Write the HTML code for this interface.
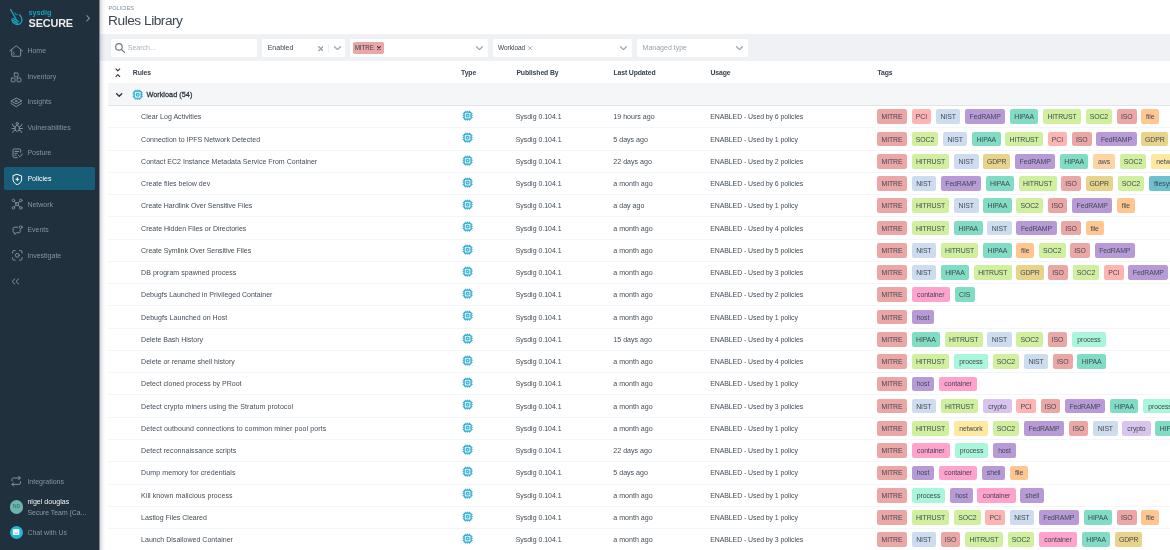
<!DOCTYPE html>
<html><head><meta charset="utf-8"><title>Rules Library</title>
<style>
*{box-sizing:border-box}
html,body{margin:0;padding:0}
body{width:1170px;height:550px;overflow:hidden;position:relative;background:#fff;font-family:"Liberation Sans",sans-serif;color:#3a4450;font-size:7px}
#side{position:absolute;left:0;top:0;width:99.4px;height:550px;background:#21303d;z-index:3}
#sidein{position:absolute;left:0;top:0;width:99px;height:550px;filter:blur(0.4px);will-change:transform}
#sideshadow{position:absolute;left:99.4px;top:0;width:5.5px;height:550px;background:linear-gradient(90deg,rgba(40,50,60,.30),rgba(40,50,60,.10) 40%,rgba(40,50,60,0));z-index:2}
.mi{position:absolute;left:4px;width:91px;height:22.6px;border-radius:2px;color:#8693a0;font-size:7px}
.mi span{position:absolute;left:23.4px;top:0.9px;line-height:22.6px;white-space:nowrap}
.mi svg{position:absolute;left:6.4px;top:5.3px;width:12.4px;height:12.4px;fill:none;stroke:#8693a0;stroke-width:1.9;stroke-linecap:round;stroke-linejoin:round}
.mi.act{background:#175d77;color:#fff}
.mi.act svg{stroke:#fff}
.mi.act span{top:0}
#main{position:absolute;left:0;top:0;width:1170px;height:550px;filter:blur(0.4px);will-change:transform}
#crumb{position:absolute;left:108.6px;top:5.4px;font-size:5.5px;color:#7f8c9a;letter-spacing:0;line-height:6px}
#title{position:absolute;left:108.1px;top:12.8px;font-size:13.7px;line-height:16px;color:#3d4752;letter-spacing:-0.48px;white-space:nowrap}
#fbar{position:absolute;left:99px;top:34px;width:1071px;height:27.2px;background:#eff1f5}
.fb{position:absolute;top:39px;height:18px;background:#fff;border-radius:1.5px}
.fb span{position:absolute;top:0;line-height:18px;white-space:nowrap}
.fb svg{position:absolute}
#thead span{position:absolute;top:67.6px;line-height:9px;font-weight:bold;font-size:6.85px;color:#38424d;white-space:nowrap;letter-spacing:-0.1px}
#grp{position:absolute;left:108.4px;top:83px;width:1062px;height:22.6px;background:#f5f6f8;border-bottom:1px solid #e1e4e9}
#grp .gt{position:absolute;left:38px;top:0;line-height:24.2px;font-weight:normal;-webkit-text-stroke:0.28px #2c3641;font-size:7.3px;color:#2c3641;letter-spacing:0.02px;white-space:nowrap}
.row{position:absolute;left:0;width:1170px;height:22.26px}
.row:after{content:"";position:absolute;left:108.4px;right:0;bottom:-0.5px;height:1px;background:#f4f5f8}
.c{position:absolute;top:0;line-height:20px;white-space:nowrap;color:#434d58}
.name{left:141.1px;font-size:7.03px}
.pub{left:515.7px;font-size:6.95px}
.upd{left:613.3px;font-size:7.08px}
.use{left:710.2px;font-size:6.95px;letter-spacing:-0.07px}
.chip{position:absolute}
.tag{position:absolute;top:3.8px;height:14.7px;line-height:15.3px;border-radius:2.2px;text-align:center;font-size:6.9px;color:#404a55;white-space:nowrap;overflow:hidden;letter-spacing:-0.1px}
</style></head>
<body>
<div id="main">
  <div id="crumb">POLICIES</div>
  <div id="title">Rules Library</div>
  <div id="fbar"></div>

  <!-- search -->
  <div class="fb" style="left:111px;width:146px">
    <svg viewBox="0 0 24 24" style="left:2.6px;top:2.6px;width:11.8px;height:11.8px" fill="none" stroke="#65778a" stroke-width="2.3" stroke-linecap="round"><circle cx="10" cy="10" r="6.6"/><path d="M15 15l6.3 6.3"/></svg>
    <span style="left:16.8px;color:#a9b3bf;font-size:7px">Search...</span>
  </div>
  <!-- enabled -->
  <div class="fb" style="left:262px;width:83.2px">
    <span style="left:5.7px;color:#3a4450;font-size:7px">Enabled</span>
    <svg viewBox="0 0 10 10" style="left:55.9px;top:6.5px;width:5.6px;height:5.6px" fill="none" stroke="#96a5b5" stroke-width="2.3" stroke-linecap="round"><path d="M1 1l8 8M9 1l-8 8"/></svg>
    <i style="position:absolute;left:66.4px;top:4.6px;width:0.8px;height:9px;background:#eef0f4"></i>
    <svg viewBox="0 0 12 8" style="left:71.6px;top:6.8px;width:7px;height:4.7px" fill="none" stroke="#96a5b5" stroke-width="2.1" stroke-linecap="round" stroke-linejoin="round"><path d="M1 1.2l5 5 5-5"/></svg>
  </div>
  <!-- MITRE select -->
  <div class="fb" style="left:350px;width:138.4px">
    <div style="position:absolute;left:2.6px;top:2.9px;width:31.4px;height:12.3px;background:#eba6a6;border-radius:1.8px"></div>
    <span style="left:4.7px;color:#3a4450;font-size:6.3px;letter-spacing:-0.1px">MITRE</span>
    <svg viewBox="0 0 10 10" style="left:27.2px;top:7.1px;width:3.8px;height:3.8px" fill="none" stroke="#2c3641" stroke-width="2.9" stroke-linecap="round"><path d="M1.4 1.4l7.2 7.2M8.6 1.4l-7.2 7.2"/></svg>
    <svg viewBox="0 0 12 8" style="left:126.4px;top:6.8px;width:7px;height:4.7px" fill="none" stroke="#96a5b5" stroke-width="2.1" stroke-linecap="round" stroke-linejoin="round"><path d="M1 1.2l5 5 5-5"/></svg>
  </div>
  <!-- Workload select -->
  <div class="fb" style="left:493px;width:139.2px">
    <span style="left:4.9px;color:#3a4450;font-size:6.5px;letter-spacing:0">Workload</span>
    <svg viewBox="0 0 10 10" style="left:35.4px;top:7px;width:4.3px;height:4.3px" fill="none" stroke="#8493a3" stroke-width="1.7" stroke-linecap="round"><path d="M1 1l8 8M9 1l-8 8"/></svg>
    <svg viewBox="0 0 12 8" style="left:126.8px;top:6.8px;width:7px;height:4.7px" fill="none" stroke="#96a5b5" stroke-width="2.1" stroke-linecap="round" stroke-linejoin="round"><path d="M1 1.2l5 5 5-5"/></svg>
  </div>
  <!-- Managed type -->
  <div class="fb" style="left:636.8px;width:110.8px">
    <span style="left:5.8px;color:#97a3b0;font-size:7px">Managed type</span>
    <svg viewBox="0 0 12 8" style="left:98.8px;top:6.8px;width:7px;height:4.7px" fill="none" stroke="#96a5b5" stroke-width="2.1" stroke-linecap="round" stroke-linejoin="round"><path d="M1 1.2l5 5 5-5"/></svg>
  </div>

  <!-- table header -->
  <div id="thead">
    <svg viewBox="0 0 12 20" style="position:absolute;left:115.1px;top:67.9px;width:5.7px;height:9.5px" fill="none" stroke="#2c3641" stroke-width="2.3" stroke-linecap="round" stroke-linejoin="round"><path d="M2 2l4 4 4-4M2 18l4-4 4 4"/></svg>
    <span style="left:132.8px">Rules</span>
    <span style="left:461.1px">Type</span>
    <span style="left:516.4px">Published By</span>
    <span style="left:613.4px">Last Updated</span>
    <span style="left:710.4px">Usage</span>
    <span style="left:877.4px">Tags</span>
  </div>
  <div id="grp">
    <svg viewBox="0 0 12 8" style="position:absolute;left:8.1px;top:9.8px;width:6.4px;height:4.3px" fill="none" stroke="#2c3641" stroke-width="2.6" stroke-linecap="round" stroke-linejoin="round"><path d="M1.2 1.2l4.8 4.8 4.8-4.8"/></svg>
    <svg class="chip" viewBox="0 0 24 24" style="left:23.6px;top:6.3px;width:11.4px;height:11.4px"><rect x="4.500" y="4.500" width="15" height="15" rx="2.400" fill="#e4f5fa" stroke="#1aa6ca" stroke-width="2.600"/><rect x="9.200" y="9.200" width="5.600" height="5.600" rx="0.500" fill="#bfe6f1" stroke="#1aa6ca" stroke-width="2.100"/><path d="M8 1.500v2M12 1.500v2M16 1.500v2M8 20.500v2M12 20.500v2M16 20.500v2M1.500 8h2M1.500 12h2M1.500 16h2M20.500 8h2M20.500 12h2M20.500 16h2" stroke="#1aa6ca" stroke-width="2.200" fill="none"/></svg>
    <span class="gt">Workload (54)</span>
  </div>
<div class="row" style="top:105.60px">
<span class="c name" style="top:1.600px;letter-spacing:0.033px">Clear Log Activities</span>
<svg class="chip" viewBox="0 0 24 24" style="left:461.7px;top:4.4px;width:11.2px;height:11.2px"><rect x="4.500" y="4.500" width="15" height="15" rx="2.400" fill="#e4f5fa" stroke="#1aa6ca" stroke-width="2.600"/><rect x="9.200" y="9.200" width="5.600" height="5.600" rx="0.500" fill="#bfe6f1" stroke="#1aa6ca" stroke-width="2.100"/><path d="M8 1.500v2M12 1.500v2M16 1.500v2M8 20.500v2M12 20.500v2M16 20.500v2M1.500 8h2M1.500 12h2M1.500 16h2M20.500 8h2M20.500 12h2M20.500 16h2" stroke="#1aa6ca" stroke-width="2.200" fill="none"/></svg>
<span class="c pub" style="top:1.600px">Sysdig 0.104.1</span>
<span class="c upd" style="top:1.600px">19 hours ago</span>
<span class="c use" style="top:1.600px">ENABLED - Used by 6 policies</span>
<span class="tag" style="left:877.00px;width:30.0px;background:#eba6a6;line-height:15.20px">MITRE</span>
<span class="tag" style="left:911.60px;width:19.7px;background:#ffb4b4;line-height:15.20px">PCI</span>
<span class="tag" style="left:935.90px;width:24.5px;background:#cddcee;line-height:15.20px">NIST</span>
<span class="tag" style="left:965.00px;width:40.3px;background:#b89bd6;line-height:15.20px">FedRAMP</span>
<span class="tag" style="left:1009.90px;width:28.6px;background:#80dcc2;line-height:15.20px">HIPAA</span>
<span class="tag" style="left:1043.10px;width:37.8px;background:#d0f09f;line-height:15.20px">HITRUST</span>
<span class="tag" style="left:1085.50px;width:26.7px;background:#d0f09f;line-height:15.20px">SOC2</span>
<span class="tag" style="left:1116.80px;width:19.8px;background:#eba6a6;line-height:15.20px">ISO</span>
<span class="tag" style="left:1141.20px;width:18.0px;background:#ffc690;line-height:15.20px">file</span>
</div>
<div class="row" style="top:127.86px">
<span class="c name" style="top:2.340px;letter-spacing:0.013px">Connection to IPFS Network Detected</span>
<svg class="chip" viewBox="0 0 24 24" style="left:461.7px;top:4.4px;width:11.2px;height:11.2px"><rect x="4.500" y="4.500" width="15" height="15" rx="2.400" fill="#e4f5fa" stroke="#1aa6ca" stroke-width="2.600"/><rect x="9.200" y="9.200" width="5.600" height="5.600" rx="0.500" fill="#bfe6f1" stroke="#1aa6ca" stroke-width="2.100"/><path d="M8 1.500v2M12 1.500v2M16 1.500v2M8 20.500v2M12 20.500v2M16 20.500v2M1.500 8h2M1.500 12h2M1.500 16h2M20.500 8h2M20.500 12h2M20.500 16h2" stroke="#1aa6ca" stroke-width="2.200" fill="none"/></svg>
<span class="c pub" style="top:2.340px">Sysdig 0.104.1</span>
<span class="c upd" style="top:2.340px">5 days ago</span>
<span class="c use" style="top:2.340px">ENABLED - Used by 1 policy</span>
<span class="tag" style="left:877.00px;width:30.0px;background:#eba6a6;line-height:16.68px">MITRE</span>
<span class="tag" style="left:911.60px;width:26.7px;background:#d0f09f;line-height:16.68px">SOC2</span>
<span class="tag" style="left:942.90px;width:24.5px;background:#cddcee;line-height:16.68px">NIST</span>
<span class="tag" style="left:972.00px;width:28.6px;background:#80dcc2;line-height:16.68px">HIPAA</span>
<span class="tag" style="left:1005.20px;width:37.8px;background:#d0f09f;line-height:16.68px">HITRUST</span>
<span class="tag" style="left:1047.60px;width:19.7px;background:#ffb4b4;line-height:16.68px">PCI</span>
<span class="tag" style="left:1071.90px;width:19.8px;background:#eba6a6;line-height:16.68px">ISO</span>
<span class="tag" style="left:1096.30px;width:40.3px;background:#b89bd6;line-height:16.68px">FedRAMP</span>
<span class="tag" style="left:1141.20px;width:27.3px;background:#e8d38a;line-height:16.68px">GDPR</span>
</div>
<div class="row" style="top:150.12px">
<span class="c name" style="top:2.080px;letter-spacing:0.012px">Contact EC2 Instance Metadata Service From Container</span>
<svg class="chip" viewBox="0 0 24 24" style="left:461.7px;top:4.4px;width:11.2px;height:11.2px"><rect x="4.500" y="4.500" width="15" height="15" rx="2.400" fill="#e4f5fa" stroke="#1aa6ca" stroke-width="2.600"/><rect x="9.200" y="9.200" width="5.600" height="5.600" rx="0.500" fill="#bfe6f1" stroke="#1aa6ca" stroke-width="2.100"/><path d="M8 1.500v2M12 1.500v2M16 1.500v2M8 20.500v2M12 20.500v2M16 20.500v2M1.500 8h2M1.500 12h2M1.500 16h2M20.500 8h2M20.500 12h2M20.500 16h2" stroke="#1aa6ca" stroke-width="2.200" fill="none"/></svg>
<span class="c pub" style="top:2.080px">Sysdig 0.104.1</span>
<span class="c upd" style="top:2.080px">22 days ago</span>
<span class="c use" style="top:2.080px">ENABLED - Used by 2 policies</span>
<span class="tag" style="left:877.00px;width:30.0px;background:#eba6a6;line-height:16.16px">MITRE</span>
<span class="tag" style="left:911.60px;width:37.8px;background:#d0f09f;line-height:16.16px">HITRUST</span>
<span class="tag" style="left:954.00px;width:24.5px;background:#cddcee;line-height:16.16px">NIST</span>
<span class="tag" style="left:983.10px;width:27.3px;background:#e8d38a;line-height:16.16px">GDPR</span>
<span class="tag" style="left:1015.00px;width:40.3px;background:#b89bd6;line-height:16.16px">FedRAMP</span>
<span class="tag" style="left:1059.90px;width:28.6px;background:#80dcc2;line-height:16.16px">HIPAA</span>
<span class="tag" style="left:1093.10px;width:22.0px;background:#ffd4a4;line-height:16.16px">aws</span>
<span class="tag" style="left:1119.70px;width:26.7px;background:#d0f09f;line-height:16.16px">SOC2</span>
<span class="tag" style="left:1151.00px;width:33.9px;background:#ffe8a0;line-height:16.16px">network</span>
</div>
<div class="row" style="top:172.38px">
<span class="c name" style="top:1.820px;letter-spacing:0.003px">Create files below dev</span>
<svg class="chip" viewBox="0 0 24 24" style="left:461.7px;top:4.4px;width:11.2px;height:11.2px"><rect x="4.500" y="4.500" width="15" height="15" rx="2.400" fill="#e4f5fa" stroke="#1aa6ca" stroke-width="2.600"/><rect x="9.200" y="9.200" width="5.600" height="5.600" rx="0.500" fill="#bfe6f1" stroke="#1aa6ca" stroke-width="2.100"/><path d="M8 1.500v2M12 1.500v2M16 1.500v2M8 20.500v2M12 20.500v2M16 20.500v2M1.500 8h2M1.500 12h2M1.500 16h2M20.500 8h2M20.500 12h2M20.500 16h2" stroke="#1aa6ca" stroke-width="2.200" fill="none"/></svg>
<span class="c pub" style="top:1.820px">Sysdig 0.104.1</span>
<span class="c upd" style="top:1.820px">a month ago</span>
<span class="c use" style="top:1.820px">ENABLED - Used by 6 policies</span>
<span class="tag" style="left:877.00px;width:30.0px;background:#eba6a6;line-height:15.64px">MITRE</span>
<span class="tag" style="left:911.60px;width:24.5px;background:#cddcee;line-height:15.64px">NIST</span>
<span class="tag" style="left:940.70px;width:40.3px;background:#b89bd6;line-height:15.64px">FedRAMP</span>
<span class="tag" style="left:985.60px;width:28.6px;background:#80dcc2;line-height:15.64px">HIPAA</span>
<span class="tag" style="left:1018.80px;width:37.8px;background:#d0f09f;line-height:15.64px">HITRUST</span>
<span class="tag" style="left:1061.20px;width:19.8px;background:#eba6a6;line-height:15.64px">ISO</span>
<span class="tag" style="left:1085.60px;width:27.3px;background:#e8d38a;line-height:15.64px">GDPR</span>
<span class="tag" style="left:1117.50px;width:26.7px;background:#d0f09f;line-height:15.64px">SOC2</span>
<span class="tag" style="left:1148.80px;width:39.8px;background:#6ec0ce;line-height:15.64px">filesystem</span>
</div>
<div class="row" style="top:194.64px">
<span class="c name" style="top:1.560px;letter-spacing:-0.051px">Create Hardlink Over Sensitive Files</span>
<svg class="chip" viewBox="0 0 24 24" style="left:461.7px;top:4.4px;width:11.2px;height:11.2px"><rect x="4.500" y="4.500" width="15" height="15" rx="2.400" fill="#e4f5fa" stroke="#1aa6ca" stroke-width="2.600"/><rect x="9.200" y="9.200" width="5.600" height="5.600" rx="0.500" fill="#bfe6f1" stroke="#1aa6ca" stroke-width="2.100"/><path d="M8 1.500v2M12 1.500v2M16 1.500v2M8 20.500v2M12 20.500v2M16 20.500v2M1.500 8h2M1.500 12h2M1.500 16h2M20.500 8h2M20.500 12h2M20.500 16h2" stroke="#1aa6ca" stroke-width="2.200" fill="none"/></svg>
<span class="c pub" style="top:1.560px">Sysdig 0.104.1</span>
<span class="c upd" style="top:1.560px">a day ago</span>
<span class="c use" style="top:1.560px">ENABLED - Used by 1 policy</span>
<span class="tag" style="left:877.00px;width:30.0px;background:#eba6a6;line-height:15.12px">MITRE</span>
<span class="tag" style="left:911.60px;width:37.8px;background:#d0f09f;line-height:15.12px">HITRUST</span>
<span class="tag" style="left:954.00px;width:24.5px;background:#cddcee;line-height:15.12px">NIST</span>
<span class="tag" style="left:983.10px;width:28.6px;background:#80dcc2;line-height:15.12px">HIPAA</span>
<span class="tag" style="left:1016.30px;width:26.7px;background:#d0f09f;line-height:15.12px">SOC2</span>
<span class="tag" style="left:1047.60px;width:19.8px;background:#eba6a6;line-height:15.12px">ISO</span>
<span class="tag" style="left:1072.00px;width:40.3px;background:#b89bd6;line-height:15.12px">FedRAMP</span>
<span class="tag" style="left:1116.90px;width:18.0px;background:#ffc690;line-height:15.12px">file</span>
</div>
<div class="row" style="top:216.90px">
<span class="c name" style="top:2.300px;letter-spacing:-0.014px">Create Hidden Files or Directories</span>
<svg class="chip" viewBox="0 0 24 24" style="left:461.7px;top:4.4px;width:11.2px;height:11.2px"><rect x="4.500" y="4.500" width="15" height="15" rx="2.400" fill="#e4f5fa" stroke="#1aa6ca" stroke-width="2.600"/><rect x="9.200" y="9.200" width="5.600" height="5.600" rx="0.500" fill="#bfe6f1" stroke="#1aa6ca" stroke-width="2.100"/><path d="M8 1.500v2M12 1.500v2M16 1.500v2M8 20.500v2M12 20.500v2M16 20.500v2M1.500 8h2M1.500 12h2M1.500 16h2M20.500 8h2M20.500 12h2M20.500 16h2" stroke="#1aa6ca" stroke-width="2.200" fill="none"/></svg>
<span class="c pub" style="top:2.300px">Sysdig 0.104.1</span>
<span class="c upd" style="top:2.300px">a month ago</span>
<span class="c use" style="top:2.300px">ENABLED - Used by 4 policies</span>
<span class="tag" style="left:877.00px;width:30.0px;background:#eba6a6;line-height:16.60px">MITRE</span>
<span class="tag" style="left:911.60px;width:37.8px;background:#d0f09f;line-height:16.60px">HITRUST</span>
<span class="tag" style="left:954.00px;width:28.6px;background:#80dcc2;line-height:16.60px">HIPAA</span>
<span class="tag" style="left:987.20px;width:24.5px;background:#cddcee;line-height:16.60px">NIST</span>
<span class="tag" style="left:1016.30px;width:40.3px;background:#b89bd6;line-height:16.60px">FedRAMP</span>
<span class="tag" style="left:1061.20px;width:19.8px;background:#eba6a6;line-height:16.60px">ISO</span>
<span class="tag" style="left:1085.60px;width:18.0px;background:#ffc690;line-height:16.60px">file</span>
</div>
<div class="row" style="top:239.16px">
<span class="c name" style="top:2.040px;letter-spacing:-0.053px">Create Symlink Over Sensitive Files</span>
<svg class="chip" viewBox="0 0 24 24" style="left:461.7px;top:4.4px;width:11.2px;height:11.2px"><rect x="4.500" y="4.500" width="15" height="15" rx="2.400" fill="#e4f5fa" stroke="#1aa6ca" stroke-width="2.600"/><rect x="9.200" y="9.200" width="5.600" height="5.600" rx="0.500" fill="#bfe6f1" stroke="#1aa6ca" stroke-width="2.100"/><path d="M8 1.500v2M12 1.500v2M16 1.500v2M8 20.500v2M12 20.500v2M16 20.500v2M1.500 8h2M1.500 12h2M1.500 16h2M20.500 8h2M20.500 12h2M20.500 16h2" stroke="#1aa6ca" stroke-width="2.200" fill="none"/></svg>
<span class="c pub" style="top:2.040px">Sysdig 0.104.1</span>
<span class="c upd" style="top:2.040px">a month ago</span>
<span class="c use" style="top:2.040px">ENABLED - Used by 5 policies</span>
<span class="tag" style="left:877.00px;width:30.0px;background:#eba6a6;line-height:16.08px">MITRE</span>
<span class="tag" style="left:911.60px;width:24.5px;background:#cddcee;line-height:16.08px">NIST</span>
<span class="tag" style="left:940.70px;width:37.8px;background:#d0f09f;line-height:16.08px">HITRUST</span>
<span class="tag" style="left:983.10px;width:28.6px;background:#80dcc2;line-height:16.08px">HIPAA</span>
<span class="tag" style="left:1016.30px;width:18.0px;background:#ffc690;line-height:16.08px">file</span>
<span class="tag" style="left:1038.90px;width:26.7px;background:#d0f09f;line-height:16.08px">SOC2</span>
<span class="tag" style="left:1070.20px;width:19.8px;background:#eba6a6;line-height:16.08px">ISO</span>
<span class="tag" style="left:1094.60px;width:40.3px;background:#b89bd6;line-height:16.08px">FedRAMP</span>
</div>
<div class="row" style="top:261.42px">
<span class="c name" style="top:1.780px;letter-spacing:0.033px">DB program spawned process</span>
<svg class="chip" viewBox="0 0 24 24" style="left:461.7px;top:4.4px;width:11.2px;height:11.2px"><rect x="4.500" y="4.500" width="15" height="15" rx="2.400" fill="#e4f5fa" stroke="#1aa6ca" stroke-width="2.600"/><rect x="9.200" y="9.200" width="5.600" height="5.600" rx="0.500" fill="#bfe6f1" stroke="#1aa6ca" stroke-width="2.100"/><path d="M8 1.500v2M12 1.500v2M16 1.500v2M8 20.500v2M12 20.500v2M16 20.500v2M1.500 8h2M1.500 12h2M1.500 16h2M20.500 8h2M20.500 12h2M20.500 16h2" stroke="#1aa6ca" stroke-width="2.200" fill="none"/></svg>
<span class="c pub" style="top:1.780px">Sysdig 0.104.1</span>
<span class="c upd" style="top:1.780px">a month ago</span>
<span class="c use" style="top:1.780px">ENABLED - Used by 3 policies</span>
<span class="tag" style="left:877.00px;width:30.0px;background:#eba6a6;line-height:15.56px">MITRE</span>
<span class="tag" style="left:911.60px;width:24.5px;background:#cddcee;line-height:15.56px">NIST</span>
<span class="tag" style="left:940.70px;width:28.6px;background:#80dcc2;line-height:15.56px">HIPAA</span>
<span class="tag" style="left:973.90px;width:37.8px;background:#d0f09f;line-height:15.56px">HITRUST</span>
<span class="tag" style="left:1016.30px;width:27.3px;background:#e8d38a;line-height:15.56px">GDPR</span>
<span class="tag" style="left:1048.20px;width:19.8px;background:#eba6a6;line-height:15.56px">ISO</span>
<span class="tag" style="left:1072.60px;width:26.7px;background:#d0f09f;line-height:15.56px">SOC2</span>
<span class="tag" style="left:1103.90px;width:19.7px;background:#ffb4b4;line-height:15.56px">PCI</span>
<span class="tag" style="left:1128.20px;width:40.3px;background:#b89bd6;line-height:15.56px">FedRAMP</span>
</div>
<div class="row" style="top:283.68px">
<span class="c name" style="top:1.520px;letter-spacing:-0.004px">Debugfs Launched in Privileged Container</span>
<svg class="chip" viewBox="0 0 24 24" style="left:461.7px;top:4.4px;width:11.2px;height:11.2px"><rect x="4.500" y="4.500" width="15" height="15" rx="2.400" fill="#e4f5fa" stroke="#1aa6ca" stroke-width="2.600"/><rect x="9.200" y="9.200" width="5.600" height="5.600" rx="0.500" fill="#bfe6f1" stroke="#1aa6ca" stroke-width="2.100"/><path d="M8 1.500v2M12 1.500v2M16 1.500v2M8 20.500v2M12 20.500v2M16 20.500v2M1.500 8h2M1.500 12h2M1.500 16h2M20.500 8h2M20.500 12h2M20.500 16h2" stroke="#1aa6ca" stroke-width="2.200" fill="none"/></svg>
<span class="c pub" style="top:1.520px">Sysdig 0.104.1</span>
<span class="c upd" style="top:1.520px">a month ago</span>
<span class="c use" style="top:1.520px">ENABLED - Used by 2 policies</span>
<span class="tag" style="left:877.00px;width:30.0px;background:#eba6a6;line-height:15.04px">MITRE</span>
<span class="tag" style="left:911.60px;width:38.4px;background:#ffa2cc;line-height:15.04px">container</span>
<span class="tag" style="left:954.60px;width:20.0px;background:#80dcc2;line-height:15.04px">CIS</span>
</div>
<div class="row" style="top:305.94px">
<span class="c name" style="top:2.260px;letter-spacing:0.046px">Debugfs Launched on Host</span>
<svg class="chip" viewBox="0 0 24 24" style="left:461.7px;top:4.4px;width:11.2px;height:11.2px"><rect x="4.500" y="4.500" width="15" height="15" rx="2.400" fill="#e4f5fa" stroke="#1aa6ca" stroke-width="2.600"/><rect x="9.200" y="9.200" width="5.600" height="5.600" rx="0.500" fill="#bfe6f1" stroke="#1aa6ca" stroke-width="2.100"/><path d="M8 1.500v2M12 1.500v2M16 1.500v2M8 20.500v2M12 20.500v2M16 20.500v2M1.500 8h2M1.500 12h2M1.500 16h2M20.500 8h2M20.500 12h2M20.500 16h2" stroke="#1aa6ca" stroke-width="2.200" fill="none"/></svg>
<span class="c pub" style="top:2.260px">Sysdig 0.104.1</span>
<span class="c upd" style="top:2.260px">a month ago</span>
<span class="c use" style="top:2.260px">ENABLED - Used by 1 policy</span>
<span class="tag" style="left:877.00px;width:30.0px;background:#eba6a6;line-height:16.52px">MITRE</span>
<span class="tag" style="left:911.60px;width:22.7px;background:#b89bd6;line-height:16.52px">host</span>
</div>
<div class="row" style="top:328.20px">
<span class="c name" style="top:2.000px;letter-spacing:-0.006px">Delete Bash History</span>
<svg class="chip" viewBox="0 0 24 24" style="left:461.7px;top:4.4px;width:11.2px;height:11.2px"><rect x="4.500" y="4.500" width="15" height="15" rx="2.400" fill="#e4f5fa" stroke="#1aa6ca" stroke-width="2.600"/><rect x="9.200" y="9.200" width="5.600" height="5.600" rx="0.500" fill="#bfe6f1" stroke="#1aa6ca" stroke-width="2.100"/><path d="M8 1.500v2M12 1.500v2M16 1.500v2M8 20.500v2M12 20.500v2M16 20.500v2M1.500 8h2M1.500 12h2M1.500 16h2M20.500 8h2M20.500 12h2M20.500 16h2" stroke="#1aa6ca" stroke-width="2.200" fill="none"/></svg>
<span class="c pub" style="top:2.000px">Sysdig 0.104.1</span>
<span class="c upd" style="top:2.000px">15 days ago</span>
<span class="c use" style="top:2.000px">ENABLED - Used by 4 policies</span>
<span class="tag" style="left:877.00px;width:30.0px;background:#eba6a6;line-height:16.00px">MITRE</span>
<span class="tag" style="left:911.60px;width:28.6px;background:#80dcc2;line-height:16.00px">HIPAA</span>
<span class="tag" style="left:944.80px;width:37.8px;background:#d0f09f;line-height:16.00px">HITRUST</span>
<span class="tag" style="left:987.20px;width:24.5px;background:#cddcee;line-height:16.00px">NIST</span>
<span class="tag" style="left:1016.30px;width:26.7px;background:#d0f09f;line-height:16.00px">SOC2</span>
<span class="tag" style="left:1047.60px;width:19.8px;background:#eba6a6;line-height:16.00px">ISO</span>
<span class="tag" style="left:1072.00px;width:33.9px;background:#aaf6da;line-height:16.00px">process</span>
</div>
<div class="row" style="top:350.46px">
<span class="c name" style="top:1.740px;letter-spacing:0.017px">Delete or rename shell history</span>
<svg class="chip" viewBox="0 0 24 24" style="left:461.7px;top:4.4px;width:11.2px;height:11.2px"><rect x="4.500" y="4.500" width="15" height="15" rx="2.400" fill="#e4f5fa" stroke="#1aa6ca" stroke-width="2.600"/><rect x="9.200" y="9.200" width="5.600" height="5.600" rx="0.500" fill="#bfe6f1" stroke="#1aa6ca" stroke-width="2.100"/><path d="M8 1.500v2M12 1.500v2M16 1.500v2M8 20.500v2M12 20.500v2M16 20.500v2M1.500 8h2M1.500 12h2M1.500 16h2M20.500 8h2M20.500 12h2M20.500 16h2" stroke="#1aa6ca" stroke-width="2.200" fill="none"/></svg>
<span class="c pub" style="top:1.740px">Sysdig 0.104.1</span>
<span class="c upd" style="top:1.740px">a month ago</span>
<span class="c use" style="top:1.740px">ENABLED - Used by 4 policies</span>
<span class="tag" style="left:877.00px;width:30.0px;background:#eba6a6;line-height:15.48px">MITRE</span>
<span class="tag" style="left:911.60px;width:37.8px;background:#d0f09f;line-height:15.48px">HITRUST</span>
<span class="tag" style="left:954.00px;width:33.9px;background:#aaf6da;line-height:15.48px">process</span>
<span class="tag" style="left:992.50px;width:26.7px;background:#d0f09f;line-height:15.48px">SOC2</span>
<span class="tag" style="left:1023.80px;width:24.5px;background:#cddcee;line-height:15.48px">NIST</span>
<span class="tag" style="left:1052.90px;width:19.8px;background:#eba6a6;line-height:15.48px">ISO</span>
<span class="tag" style="left:1077.30px;width:28.6px;background:#80dcc2;line-height:15.48px">HIPAA</span>
</div>
<div class="row" style="top:372.72px">
<span class="c name" style="top:1.480px;letter-spacing:0.009px">Detect cloned process by PRoot</span>
<svg class="chip" viewBox="0 0 24 24" style="left:461.7px;top:4.4px;width:11.2px;height:11.2px"><rect x="4.500" y="4.500" width="15" height="15" rx="2.400" fill="#e4f5fa" stroke="#1aa6ca" stroke-width="2.600"/><rect x="9.200" y="9.200" width="5.600" height="5.600" rx="0.500" fill="#bfe6f1" stroke="#1aa6ca" stroke-width="2.100"/><path d="M8 1.500v2M12 1.500v2M16 1.500v2M8 20.500v2M12 20.500v2M16 20.500v2M1.500 8h2M1.500 12h2M1.500 16h2M20.500 8h2M20.500 12h2M20.500 16h2" stroke="#1aa6ca" stroke-width="2.200" fill="none"/></svg>
<span class="c pub" style="top:1.480px">Sysdig 0.104.1</span>
<span class="c upd" style="top:1.480px">a month ago</span>
<span class="c use" style="top:1.480px">ENABLED - Used by 1 policy</span>
<span class="tag" style="left:877.00px;width:30.0px;background:#eba6a6;line-height:14.96px">MITRE</span>
<span class="tag" style="left:911.60px;width:22.7px;background:#b89bd6;line-height:14.96px">host</span>
<span class="tag" style="left:938.90px;width:38.4px;background:#ffa2cc;line-height:14.96px">container</span>
</div>
<div class="row" style="top:394.98px">
<span class="c name" style="top:2.220px;letter-spacing:0.081px">Detect crypto miners using the Stratum protocol</span>
<svg class="chip" viewBox="0 0 24 24" style="left:461.7px;top:4.4px;width:11.2px;height:11.2px"><rect x="4.500" y="4.500" width="15" height="15" rx="2.400" fill="#e4f5fa" stroke="#1aa6ca" stroke-width="2.600"/><rect x="9.200" y="9.200" width="5.600" height="5.600" rx="0.500" fill="#bfe6f1" stroke="#1aa6ca" stroke-width="2.100"/><path d="M8 1.500v2M12 1.500v2M16 1.500v2M8 20.500v2M12 20.500v2M16 20.500v2M1.500 8h2M1.500 12h2M1.500 16h2M20.500 8h2M20.500 12h2M20.500 16h2" stroke="#1aa6ca" stroke-width="2.200" fill="none"/></svg>
<span class="c pub" style="top:2.220px">Sysdig 0.104.1</span>
<span class="c upd" style="top:2.220px">a month ago</span>
<span class="c use" style="top:2.220px">ENABLED - Used by 3 policies</span>
<span class="tag" style="left:877.00px;width:30.0px;background:#eba6a6;line-height:16.44px">MITRE</span>
<span class="tag" style="left:911.60px;width:24.5px;background:#cddcee;line-height:16.44px">NIST</span>
<span class="tag" style="left:940.70px;width:37.8px;background:#d0f09f;line-height:16.44px">HITRUST</span>
<span class="tag" style="left:983.10px;width:28.5px;background:#d8c4ec;line-height:16.44px">crypto</span>
<span class="tag" style="left:1016.20px;width:19.7px;background:#ffb4b4;line-height:16.44px">PCI</span>
<span class="tag" style="left:1040.50px;width:19.8px;background:#eba6a6;line-height:16.44px">ISO</span>
<span class="tag" style="left:1064.90px;width:40.3px;background:#b89bd6;line-height:16.44px">FedRAMP</span>
<span class="tag" style="left:1109.80px;width:28.6px;background:#80dcc2;line-height:16.44px">HIPAA</span>
<span class="tag" style="left:1143.00px;width:33.9px;background:#aaf6da;line-height:16.44px">process</span>
</div>
<div class="row" style="top:417.24px">
<span class="c name" style="top:1.960px;letter-spacing:0.100px">Detect outbound connections to common miner pool ports</span>
<svg class="chip" viewBox="0 0 24 24" style="left:461.7px;top:4.4px;width:11.2px;height:11.2px"><rect x="4.500" y="4.500" width="15" height="15" rx="2.400" fill="#e4f5fa" stroke="#1aa6ca" stroke-width="2.600"/><rect x="9.200" y="9.200" width="5.600" height="5.600" rx="0.500" fill="#bfe6f1" stroke="#1aa6ca" stroke-width="2.100"/><path d="M8 1.500v2M12 1.500v2M16 1.500v2M8 20.500v2M12 20.500v2M16 20.500v2M1.500 8h2M1.500 12h2M1.500 16h2M20.500 8h2M20.500 12h2M20.500 16h2" stroke="#1aa6ca" stroke-width="2.200" fill="none"/></svg>
<span class="c pub" style="top:1.960px">Sysdig 0.104.1</span>
<span class="c upd" style="top:1.960px">a month ago</span>
<span class="c use" style="top:1.960px">ENABLED - Used by 1 policy</span>
<span class="tag" style="left:877.00px;width:30.0px;background:#eba6a6;line-height:15.92px">MITRE</span>
<span class="tag" style="left:911.60px;width:37.8px;background:#d0f09f;line-height:15.92px">HITRUST</span>
<span class="tag" style="left:954.00px;width:33.9px;background:#ffe8a0;line-height:15.92px">network</span>
<span class="tag" style="left:992.50px;width:26.7px;background:#d0f09f;line-height:15.92px">SOC2</span>
<span class="tag" style="left:1023.80px;width:40.3px;background:#b89bd6;line-height:15.92px">FedRAMP</span>
<span class="tag" style="left:1068.70px;width:19.8px;background:#eba6a6;line-height:15.92px">ISO</span>
<span class="tag" style="left:1093.10px;width:24.5px;background:#cddcee;line-height:15.92px">NIST</span>
<span class="tag" style="left:1122.20px;width:28.5px;background:#d8c4ec;line-height:15.92px">crypto</span>
<span class="tag" style="left:1155.30px;width:28.6px;background:#80dcc2;line-height:15.92px">HIPAA</span>
</div>
<div class="row" style="top:439.50px">
<span class="c name" style="top:1.700px;letter-spacing:0.057px">Detect reconnaissance scripts</span>
<svg class="chip" viewBox="0 0 24 24" style="left:461.7px;top:4.4px;width:11.2px;height:11.2px"><rect x="4.500" y="4.500" width="15" height="15" rx="2.400" fill="#e4f5fa" stroke="#1aa6ca" stroke-width="2.600"/><rect x="9.200" y="9.200" width="5.600" height="5.600" rx="0.500" fill="#bfe6f1" stroke="#1aa6ca" stroke-width="2.100"/><path d="M8 1.500v2M12 1.500v2M16 1.500v2M8 20.500v2M12 20.500v2M16 20.500v2M1.500 8h2M1.500 12h2M1.500 16h2M20.500 8h2M20.500 12h2M20.500 16h2" stroke="#1aa6ca" stroke-width="2.200" fill="none"/></svg>
<span class="c pub" style="top:1.700px">Sysdig 0.104.1</span>
<span class="c upd" style="top:1.700px">22 days ago</span>
<span class="c use" style="top:1.700px">ENABLED - Used by 1 policy</span>
<span class="tag" style="left:877.00px;width:30.0px;background:#eba6a6;line-height:15.40px">MITRE</span>
<span class="tag" style="left:911.60px;width:38.4px;background:#ffa2cc;line-height:15.40px">container</span>
<span class="tag" style="left:954.60px;width:33.9px;background:#aaf6da;line-height:15.40px">process</span>
<span class="tag" style="left:993.10px;width:22.7px;background:#b89bd6;line-height:15.40px">host</span>
</div>
<div class="row" style="top:461.76px">
<span class="c name" style="top:1.440px;letter-spacing:0.092px">Dump memory for credentials</span>
<svg class="chip" viewBox="0 0 24 24" style="left:461.7px;top:4.4px;width:11.2px;height:11.2px"><rect x="4.500" y="4.500" width="15" height="15" rx="2.400" fill="#e4f5fa" stroke="#1aa6ca" stroke-width="2.600"/><rect x="9.200" y="9.200" width="5.600" height="5.600" rx="0.500" fill="#bfe6f1" stroke="#1aa6ca" stroke-width="2.100"/><path d="M8 1.500v2M12 1.500v2M16 1.500v2M8 20.500v2M12 20.500v2M16 20.500v2M1.500 8h2M1.500 12h2M1.500 16h2M20.500 8h2M20.500 12h2M20.500 16h2" stroke="#1aa6ca" stroke-width="2.200" fill="none"/></svg>
<span class="c pub" style="top:1.440px">Sysdig 0.104.1</span>
<span class="c upd" style="top:1.440px">5 days ago</span>
<span class="c use" style="top:1.440px">ENABLED - Used by 1 policy</span>
<span class="tag" style="left:877.00px;width:30.0px;background:#eba6a6;line-height:14.88px">MITRE</span>
<span class="tag" style="left:911.60px;width:22.7px;background:#b89bd6;line-height:14.88px">host</span>
<span class="tag" style="left:938.90px;width:38.4px;background:#ffa2cc;line-height:14.88px">container</span>
<span class="tag" style="left:981.90px;width:23.6px;background:#b89bd6;line-height:14.88px">shell</span>
<span class="tag" style="left:1010.10px;width:18.0px;background:#ffc690;line-height:14.88px">file</span>
</div>
<div class="row" style="top:484.02px">
<span class="c name" style="top:2.180px;letter-spacing:0.078px">Kill known malicious process</span>
<svg class="chip" viewBox="0 0 24 24" style="left:461.7px;top:4.4px;width:11.2px;height:11.2px"><rect x="4.500" y="4.500" width="15" height="15" rx="2.400" fill="#e4f5fa" stroke="#1aa6ca" stroke-width="2.600"/><rect x="9.200" y="9.200" width="5.600" height="5.600" rx="0.500" fill="#bfe6f1" stroke="#1aa6ca" stroke-width="2.100"/><path d="M8 1.500v2M12 1.500v2M16 1.500v2M8 20.500v2M12 20.500v2M16 20.500v2M1.500 8h2M1.500 12h2M1.500 16h2M20.500 8h2M20.500 12h2M20.500 16h2" stroke="#1aa6ca" stroke-width="2.200" fill="none"/></svg>
<span class="c pub" style="top:2.180px">Sysdig 0.104.1</span>
<span class="c upd" style="top:2.180px">a month ago</span>
<span class="c use" style="top:2.180px">ENABLED - Used by 1 policy</span>
<span class="tag" style="left:877.00px;width:30.0px;background:#eba6a6;line-height:16.36px">MITRE</span>
<span class="tag" style="left:911.60px;width:33.9px;background:#aaf6da;line-height:16.36px">process</span>
<span class="tag" style="left:950.10px;width:22.7px;background:#b89bd6;line-height:16.36px">host</span>
<span class="tag" style="left:977.40px;width:38.4px;background:#ffa2cc;line-height:16.36px">container</span>
<span class="tag" style="left:1020.40px;width:23.6px;background:#b89bd6;line-height:16.36px">shell</span>
</div>
<div class="row" style="top:506.28px">
<span class="c name" style="top:1.920px;letter-spacing:-0.010px">Lastlog Files Cleared</span>
<svg class="chip" viewBox="0 0 24 24" style="left:461.7px;top:4.4px;width:11.2px;height:11.2px"><rect x="4.500" y="4.500" width="15" height="15" rx="2.400" fill="#e4f5fa" stroke="#1aa6ca" stroke-width="2.600"/><rect x="9.200" y="9.200" width="5.600" height="5.600" rx="0.500" fill="#bfe6f1" stroke="#1aa6ca" stroke-width="2.100"/><path d="M8 1.500v2M12 1.500v2M16 1.500v2M8 20.500v2M12 20.500v2M16 20.500v2M1.500 8h2M1.500 12h2M1.500 16h2M20.500 8h2M20.500 12h2M20.500 16h2" stroke="#1aa6ca" stroke-width="2.200" fill="none"/></svg>
<span class="c pub" style="top:1.920px">Sysdig 0.104.1</span>
<span class="c upd" style="top:1.920px">a month ago</span>
<span class="c use" style="top:1.920px">ENABLED - Used by 1 policy</span>
<span class="tag" style="left:877.00px;width:30.0px;background:#eba6a6;line-height:15.84px">MITRE</span>
<span class="tag" style="left:911.60px;width:37.8px;background:#d0f09f;line-height:15.84px">HITRUST</span>
<span class="tag" style="left:954.00px;width:26.7px;background:#d0f09f;line-height:15.84px">SOC2</span>
<span class="tag" style="left:985.30px;width:19.7px;background:#ffb4b4;line-height:15.84px">PCI</span>
<span class="tag" style="left:1009.60px;width:24.5px;background:#cddcee;line-height:15.84px">NIST</span>
<span class="tag" style="left:1038.70px;width:40.3px;background:#b89bd6;line-height:15.84px">FedRAMP</span>
<span class="tag" style="left:1083.60px;width:28.6px;background:#80dcc2;line-height:15.84px">HIPAA</span>
<span class="tag" style="left:1116.80px;width:19.8px;background:#eba6a6;line-height:15.84px">ISO</span>
<span class="tag" style="left:1141.20px;width:18.0px;background:#ffc690;line-height:15.84px">file</span>
</div>
<div class="row" style="top:528.54px">
<span class="c name" style="top:1.660px;letter-spacing:0.021px">Launch Disallowed Container</span>
<svg class="chip" viewBox="0 0 24 24" style="left:461.7px;top:4.4px;width:11.2px;height:11.2px"><rect x="4.500" y="4.500" width="15" height="15" rx="2.400" fill="#e4f5fa" stroke="#1aa6ca" stroke-width="2.600"/><rect x="9.200" y="9.200" width="5.600" height="5.600" rx="0.500" fill="#bfe6f1" stroke="#1aa6ca" stroke-width="2.100"/><path d="M8 1.500v2M12 1.500v2M16 1.500v2M8 20.500v2M12 20.500v2M16 20.500v2M1.500 8h2M1.500 12h2M1.500 16h2M20.500 8h2M20.500 12h2M20.500 16h2" stroke="#1aa6ca" stroke-width="2.200" fill="none"/></svg>
<span class="c pub" style="top:1.660px">Sysdig 0.104.1</span>
<span class="c upd" style="top:1.660px">a month ago</span>
<span class="c use" style="top:1.660px">ENABLED - Used by 3 policies</span>
<span class="tag" style="left:877.00px;width:30.0px;background:#eba6a6;line-height:15.32px">MITRE</span>
<span class="tag" style="left:911.60px;width:24.5px;background:#cddcee;line-height:15.32px">NIST</span>
<span class="tag" style="left:940.70px;width:19.8px;background:#eba6a6;line-height:15.32px">ISO</span>
<span class="tag" style="left:965.10px;width:37.8px;background:#d0f09f;line-height:15.32px">HITRUST</span>
<span class="tag" style="left:1007.50px;width:26.7px;background:#d0f09f;line-height:15.32px">SOC2</span>
<span class="tag" style="left:1038.80px;width:38.4px;background:#ffa2cc;line-height:15.32px">container</span>
<span class="tag" style="left:1081.80px;width:28.6px;background:#80dcc2;line-height:15.32px">HIPAA</span>
<span class="tag" style="left:1115.00px;width:27.3px;background:#e8d38a;line-height:15.32px">GDPR</span>
</div>
</div>
<div id="sideshadow"></div><div style="position:absolute;left:99px;top:0;width:1px;height:550px;background:#7e8992;z-index:4"></div>
<div id="side"><div id="sidein">
    <!-- logo -->
  <svg viewBox="0 0 26 32" style="position:absolute;left:10px;top:8.800px;width:13.400px;height:16.400px" fill="none" stroke="#17a0c0" stroke-linecap="round" stroke-linejoin="round">
    <path d="M1.200 1.200L13.500 23" stroke-width="2.700"/>
    <path d="M9.500 7.500l2.200 4 2.600-1" stroke-width="1.900"/>
    <path d="M18.500 11.500c5.500 4.500 6.500 13 1.500 16.800c-3.500 2.600-9 2.300-12.500-0.800c-2.200-2-4-5.500-3.500-8.300" stroke-width="2.700"/>
    <path d="M5 21.500l9.500 5.500M6.500 18.500l10.500 6M9 25l6.500 3.800" stroke-width="2.300"/>
  </svg>
  <div style="position:absolute;left:28.500px;top:7.900px;font-size:7.300px;line-height:9px;font-weight:bold;color:#14a0c2;letter-spacing:-0.050px">sysdig</div>
  <div style="position:absolute;left:28.600px;top:17.100px;font-size:10.900px;line-height:13px;font-weight:bold;color:#ececec;letter-spacing:-0.180px">SECURE</div>
  <svg viewBox="0 0 8 12" style="position:absolute;left:86.400px;top:15.200px;width:4.400px;height:6.600px" fill="none" stroke="#8693a0" stroke-width="1.900" stroke-linecap="round" stroke-linejoin="round"><path d="M1.500 1.200l4.800 4.800-4.800 4.800"/></svg>

  <div class="mi" style="top:39.200px"><svg viewBox="0 0 24 24" style="overflow:visible;top:5.800px"><path d="M-0.400 11.600L12 1.400l12.400 10.200"/><path d="M3.400 9.200v11a1.600 1.600 0 0 0 1.600 1.600h14a1.600 1.600 0 0 0 1.600-1.600v-11"/><path d="M7.600 13.800v4.800" stroke-width="1.500"/></svg><span>Home</span></div>
  <div class="mi" style="top:64.800px"><svg viewBox="0 0 24 24" style="top:5.900px"><g stroke-width="1.700"><rect x="8.300" y="3.700" width="7.400" height="7.400" rx="0.900"/><rect x="2.500" y="13.600" width="7.400" height="7.400" rx="0.900"/><rect x="13.700" y="13.600" width="7.400" height="7.400" rx="0.900"/></g></svg><span>Inventory</span></div>
  <div class="mi" style="top:90.300px"><svg viewBox="0 0 24 24"><path d="M12 4.400L1.600 9.700 12 15 22.400 9.700z"/><path d="M1.800 14.200L12 20.800l10.200-6.600"/><path d="M10.500 9.700h3" stroke-width="2.600"/></svg><span>Insights</span></div>
  <div class="mi" style="top:115.900px"><svg viewBox="0 0 24 24" style="left:7.100px"><ellipse cx="12" cy="14.300" rx="4.400" ry="5.600"/><circle cx="12" cy="5" r="2.300"/><path d="M7.900 11.600L4.400 9.900 2.800 6.200M7.600 14.600H1.800M8.200 17.800l-3.600 1.800-1.200 2.600M16.100 11.600l3.500-1.700 1.600-3.700M16.400 14.600h5.800M15.800 17.800l3.600 1.800 1.200 2.600"/></svg><span>Vulnerabilities</span></div>
  <div class="mi" style="top:141.500px"><svg viewBox="0 0 24 24" style="left:6.900px"><path d="M18.800 10.200V6.200a2.400 2.400 0 0 0-2.400-2.400H6.300a2.400 2.400 0 0 0-2.400 2.400v12a2.400 2.400 0 0 0 2.400 2.400h6"/><path d="M7.600 8.600h7.400M7.600 12.200h4.400M7.600 15.800h2.400"/><path d="M14.400 16.400l2.700 2.700 5.300-5.800"/></svg><span>Posture</span></div>
  <div class="mi act" style="top:167px;height:23px"><svg viewBox="0 0 24 24" style="top:5.600px;left:7.100px"><path d="M12.200 2.750l8.350 3v6.200c0 5-3.600 8.800-8.350 10.900-4.750-2.100-8.350-5.900-8.350-10.900v-6.200z"/><path d="M12.200 9.300v5.400M9.500 12h5.400" stroke-width="2.100"/></svg><span style="line-height:23.200px">Policies</span></div>
  <div class="mi" style="top:192.700px"><svg viewBox="0 0 24 24" style="left:7.100px"><rect x="9.200" y="9.400" width="5.200" height="5.200" rx="0.800"/><circle cx="4.600" cy="4.750" r="2.500" stroke-width="1.600"/><circle cx="19" cy="4.750" r="2.500" stroke-width="1.600"/><circle cx="4.600" cy="19.250" r="2.500" stroke-width="1.600"/><circle cx="19" cy="19.250" r="2.500" stroke-width="1.600"/><path d="M6.600 6.750l2.600 2.650M17 6.750l-2.600 2.650M6.600 17.250l2.600-2.650M17 17.250l-2.600-2.650"/></svg><span>Network</span></div>
  <div class="mi" style="top:218.300px"><svg viewBox="0 0 24 24" style="left:7px;top:5.600px"><path d="M13.200 6.200H6.600a2.500 2.500 0 0 0-2.500 2.500v5.800a2.500 2.500 0 0 0 2.500 2.500h.6v3.100l3.400-3.100h4.600a2.500 2.500 0 0 0 2.500-2.500v-3.300"/><circle cx="19" cy="6.200" r="2.700" stroke-width="1.700"/></svg><span>Events</span></div>
  <div class="mi" style="top:243.900px"><svg viewBox="0 0 24 24" style="left:7px"><path d="M3.100 8V5.500a2.400 2.400 0 0 1 2.400-2.400H8M16.400 3.100h2.500a2.400 2.400 0 0 1 2.400 2.400V8M21.300 16.600v2.500a2.400 2.400 0 0 1-2.400 2.400h-2.500M8 21.500H5.500a2.400 2.400 0 0 1-2.400-2.400v-2.500"/><circle cx="12.200" cy="12.300" r="3.700"/></svg><span>Investigate</span></div>
  <svg viewBox="0 0 16 12" style="position:absolute;left:11.200px;top:277.800px;width:8.800px;height:6.900px" fill="none" stroke="#8693a0" stroke-width="1.800" stroke-linecap="round" stroke-linejoin="round"><path d="M7 1.200L2 6l5 4.800M14 1.200L9 6l5 4.800"/></svg>

  <div class="mi" style="top:469.700px"><svg viewBox="0 0 24 24"><path d="M16.800 2.400l3.400 3.400-3.400 3.400"/><path d="M3.800 11.200V8.600a2.800 2.800 0 0 1 2.800-2.800h13.200"/><path d="M7.200 21.600l-3.400-3.400 3.400-3.400"/><path d="M20.200 12.800v2.600a2.800 2.800 0 0 1-2.800 2.800H4.200"/></svg><span>Integrations</span></div>
  <div style="position:absolute;left:9.800px;top:500.300px;width:13.400px;height:13.400px;border-radius:50%;background:#6fb3ae;color:#2b6a70;font-size:5.200px;line-height:13.600px;text-align:center;letter-spacing:-0.100px">ND</div>
  <div style="position:absolute;left:27.400px;top:497.600px;font-size:7.100px;line-height:9px;color:#f2f4f6;white-space:nowrap">nigel douglas</div>
  <div style="position:absolute;left:27.400px;top:507.700px;font-size:6.850px;line-height:9px;color:#8f9ba8;white-space:nowrap">Secure Team (Ca...</div>
  <div style="position:absolute;left:9.800px;top:525.800px;width:13.400px;height:13.400px;border-radius:50%;background:#1fb6d9"></div>
  <svg viewBox="0 0 24 24" style="position:absolute;left:12.400px;top:528.400px;width:8.200px;height:8.200px"><path d="M4 3.500h16a1.500 1.500 0 0 1 1.500 1.500v14a1.500 1.500 0 0 1-1.500 1.500H4A1.500 1.500 0 0 1 2.500 19V5A1.500 1.500 0 0 1 4 3.500z" fill="#fff"/><path d="M7 13.800c1.400 1.600 3 2.300 5 2.300s3.600-.7 5-2.300" fill="none" stroke="#1fb6d9" stroke-width="1.800" stroke-linecap="round"/></svg>
  <div style="position:absolute;left:27.400px;top:528px;font-size:7px;line-height:9px;color:#8693a0;white-space:nowrap">Chat with Us</div>

</div></div>
</body></html>
